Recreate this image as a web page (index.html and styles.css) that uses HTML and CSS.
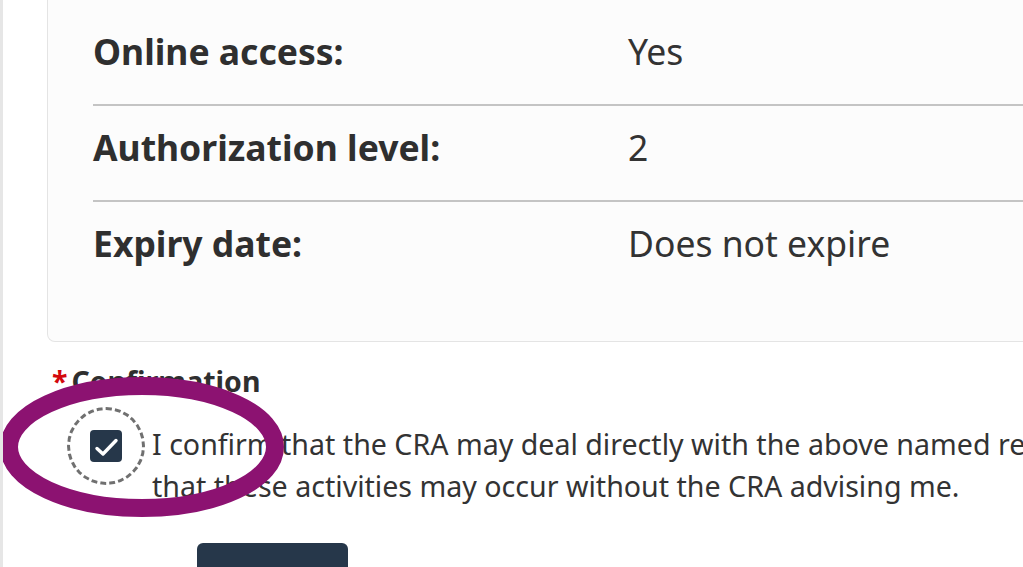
FILE: index.html
```html
<!DOCTYPE html>
<html lang="en">
<head>
<meta charset="utf-8">
<title>Confirmation</title>
<link rel="stylesheet" href="styles.css">
</head>
<body>
<div class="page">
  <section class="card">
    <dl class="details">
      <div class="row"><dt>Online access:</dt><dd>Yes</dd></div>
      <div class="row"><dt>Authorization level:</dt><dd>2</dd></div>
      <div class="row"><dt>Expiry date:</dt><dd>Does not expire</dd></div>
    </dl>
  </section>
  <div class="confirm">
    <div class="legend"><span class="req">*</span>Confirmation</div>
    <label class="check">
      <span class="focus-ring"><span class="box"><svg width="32" height="32" viewBox="0 0 32 32"><path d="M7 18.5 L13 24 L26 10.5" fill="none" stroke="#fff" stroke-width="3.4" stroke-linecap="round" stroke-linejoin="round"/></svg></span></span>
      <span class="check-text">I confirm that the CRA may deal directly with the above named representative and<br>that these activities may occur without the CRA advising me.</span>
    </label>
  </div>
  <div class="actions"><button class="btn" type="button"></button></div>
  <svg class="annotation" width="300" height="160" viewBox="0 0 300 160"><ellipse cx="142" cy="71" rx="133" ry="61" fill="none" stroke="#8c1271" stroke-width="18"/></svg>
</div>
</body>
</html>
```
FILE: styles.css
```css
html, body {
  margin: 0;
  padding: 0;
  background: #fff;
  overflow: hidden;
}
body {
  font-family: "Noto Sans", "Open Sans", sans-serif;
  color: #333;
  width: 1023px;
  height: 567px;
}
.page {
  position: relative;
  height: 567px;
  border-left: 3px solid #e6e6e6;
  overflow: hidden;
}
.card {
  margin-left: 44px;
  margin-right: -200px;
  border: 1px solid #e4e4e4;
  border-top: none;
  border-radius: 0 0 8px 8px;
  background: #fcfcfc;
  padding: 10px 0 45px 45px;
}
.details {
  margin: 0;
}
.row {
  display: grid;
  grid-template-columns: 535px 1fr;
  padding: 14px 0 26px;
  line-height: 54px;
  font-size: 35.5px;
  border-bottom: 2px solid #c4c4c4;
}
.row:last-child {
  border-bottom: none;
}
dt {
  font-weight: 700;
  color: #2f2f2f;
}
dd {
  margin: 0;
  color: #333;
}
.confirm {
  padding-top: 19px;
}
.legend {
  margin-left: 49px;
  font-size: 28.5px;
  font-weight: 700;
  line-height: 40px;
  color: #2f2f2f;
}
.req {
  color: #d3080c;
  margin-right: 4px;
}
.check {
  display: flex;
  align-items: flex-start;
  margin-top: 22px;
  margin-left: 64px;
}
.focus-ring {
  flex: none;
  width: 72px;
  height: 72px;
  border: 3px dashed #707070;
  border-radius: 50%;
  display: flex;
  align-items: center;
  justify-content: center;
  margin-top: -16px;
}
.box {
  width: 32px;
  height: 32px;
  border-radius: 4px;
  background: #26374a;
  display: block;
}
.box svg {
  display: block;
}
.check-text {
  margin-left: 7px;
  font-size: 28.6px;
  line-height: 42px;
  white-space: nowrap;
  color: #333;
}
.actions {
  margin-top: 36px;
  margin-left: 194px;
}
.btn {
  width: 151px;
  height: 60px;
  border: none;
  border-radius: 6px;
  background: #26374a;
  display: block;
}
.annotation {
  position: absolute;
  left: -3px;
  top: 376px;
}
```
